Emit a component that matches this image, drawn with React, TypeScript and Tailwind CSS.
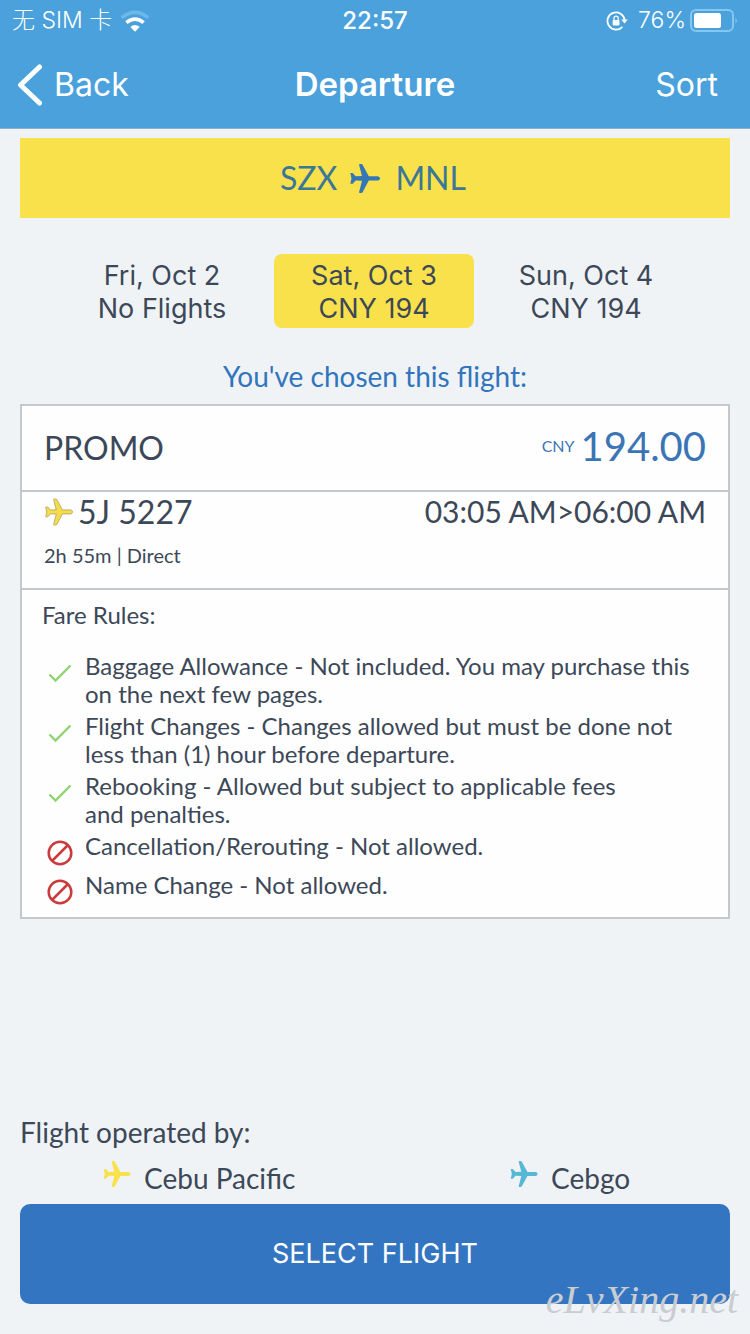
import React from "react";

const days = [
  { date: "Fri, Oct 2", fare: "No Flights", selected: false },
  { date: "Sat, Oct 3", fare: "CNY 194", selected: true },
  { date: "Sun, Oct 4", fare: "CNY 194", selected: false },
];

const rules = [
  { ok: true, text: "Baggage Allowance - Not included. You may purchase this on the next few pages." },
  { ok: true, text: "Flight Changes - Changes allowed but must be done not less than (1) hour before departure." },
  { ok: true, text: "Rebooking - Allowed but subject to applicable fees and\u00a0penalties." },
  { ok: false, text: "Cancellation/Rerouting - Not allowed." },
  { ok: false, text: "Name Change - Not allowed." },
];

function Plane({ className }: { className: string }) {
  return (
    <svg viewBox="-1 -1 32 31" className={className} fill="currentColor" aria-hidden="true">
      <path d="M0.3 9H2.2Q2.8 9 3.2 9.5L5.6 12.3L12 12L9.1 0.9Q9 0 9.8 0H11.4Q12.2 0 12.6 0.8L18.8 12.2H27.6Q30 12.4 30 14.4Q30 16.4 27.6 16.6H18.8L12.6 28.2Q12.2 29 11.4 29H9.8Q9 29 9.1 28.1L12 16.8L5.6 16.5L3.2 19.3Q2.8 19.8 2.2 19.8H0.3L1.5 14.4Z" />
    </svg>
  );
}

function Check() {
  return (
    <svg viewBox="0 0 26 26" className="size-[26px]" fill="none" stroke="#8fd470" strokeWidth="2.4" aria-hidden="true">
      <path d="M2.5 14.5L8.5 20.5L23.5 5.5" />
    </svg>
  );
}

function Forbidden() {
  return (
    <svg viewBox="0 0 26 26" className="size-[26px]" fill="none" stroke="#cb3b3b" strokeWidth="2.5" aria-hidden="true">
      <circle cx="13" cy="13" r="11.3" />
      <path d="M5.5 20.5L20.5 5.5" />
    </svg>
  );
}

function StatusBar() {
  return (
    <div className="grid h-[41px] grid-cols-3 items-center px-3 text-[23px]">
      <div className="flex items-center gap-2">
        <span className="font-['Inter','Noto_Sans_CJK_SC',sans-serif] font-light whitespace-nowrap">无 SIM 卡</span>
        <svg viewBox="0 0 30 24" className="h-6 w-[30px]" fill="none" aria-label="Wi-Fi">
          <path d="M1.8 8.6Q15 -2 28.2 8.6" stroke="#6cb8e8" strokeWidth="3.6" />
          <path d="M6.4 13.6Q15 6.6 23.6 13.6" stroke="#fff" strokeWidth="3.8" />
          <path d="M10.3 18Q15 14.2 19.7 18L15 22.8Z" fill="#fff" />
        </svg>
      </div>
      <span className="text-center text-[24px] font-medium">22:57</span>
      <div className="flex items-center justify-end">
        <svg viewBox="0 0 22 20" className="mr-[10px] h-5 w-[22px]" fill="none" stroke="currentColor" strokeWidth="1.8" aria-label="Rotation locked">
          <path d="M16.4 15.8A8.6 8.6 0 1 1 18.6 9" />
          <path d="M15.2 8.6H21.8L18.5 12.6Z" fill="currentColor" stroke="none" />
          <rect x="6.7" y="9" width="6.8" height="5.4" rx="0.8" fill="currentColor" stroke="none" />
          <path d="M8 9.5V7.2A2.1 2.1 0 0 1 12.2 7.2V9.5" strokeWidth="1.3" />
        </svg>
        <span className="mr-1 font-light">76%</span>
        <svg viewBox="0 0 48 24" className="h-6 w-12" fill="none" aria-label="Battery">
          <rect x="1" y="1" width="42" height="21" rx="5" stroke="#85c7ef" strokeWidth="2" />
          <rect x="4" y="4" width="27" height="15" rx="2.5" fill="#fff" />
          <path d="M45.5 8.5Q48 11.5 45.5 15Z" fill="#85c7ef" />
        </svg>
      </div>
    </div>
  );
}

export default function App() {
  return (
    <div className="flex min-h-screen flex-col bg-[#eff3f6] font-['Lato',sans-serif] text-[#3c4858]">
      <header className="border-b border-[#8fb1c9] bg-[#4aa1db] font-['Inter',sans-serif] text-white">
        <StatusBar />
        <nav className="grid h-[87px] grid-cols-3 items-center px-4 text-[32px]">
          <button type="button" className="flex items-center gap-3">
            <svg viewBox="0 0 26 44" className="h-11 w-[26px]" fill="none" stroke="currentColor" strokeWidth="5" strokeLinecap="round" strokeLinejoin="round" aria-hidden="true">
              <path d="M23.5 4L4.5 22L23.5 40" />
            </svg>
            <span>Back</span>
          </button>
          <h1 className="text-center text-[33px] font-semibold">Departure</h1>
          <button type="button" className="justify-self-end pr-4">Sort</button>
        </nav>
      </header>

      <main className="flex grow flex-col px-5 pt-[9px] pb-[30px]">
        <div className="flex h-20 items-center justify-center bg-[#f9e14c] pr-1 text-[32px] text-[#3b7796]">
          <span>SZX</span>
          <Plane className="mr-[14px] ml-3 h-[31px] w-8 text-[#3477b5]" />
          <span>MNL</span>
        </div>

        <div className="mt-9 flex justify-center gap-3 pr-[2px] font-['Inter',sans-serif] text-[27px] leading-[33px]">
          {days.map((d) => (
            <button
              key={d.date}
              type="button"
              aria-pressed={d.selected}
              className={d.selected ? "h-[74px] w-[200px] rounded-lg bg-[#f9e14c] pt-[2px]" : "h-[74px] w-[200px] rounded-lg pt-[2px]"}
            >
              <span className="block">{d.date}</span>
              <span className="block">{d.fare}</span>
            </button>
          ))}
        </div>

        <h2 className="mt-8 text-center text-[28px] leading-8 text-[#3275bd]">You've chosen this flight:</h2>

        <section className="mt-3 border-2 border-[#c5c8cb] bg-[#fefefe]">
          <div className="flex h-[86px] items-center justify-between border-b-2 border-[#c5c8cb] px-[22px]">
            <span className="text-[32px]">PROMO</span>
            <span className="flex items-center gap-[6px] pb-1 text-[#3b75b5]">
              <span className="text-[16px]">CNY</span>
              <span className="text-[40px]">194.00</span>
            </span>
          </div>
          <div className="h-[98px] border-b-2 border-[#c5c8cb] px-[22px]">
            <div className="flex h-10 items-center justify-between">
              <span className="flex items-center gap-1 text-[32px]">
                <Plane className="h-7 w-[30px] stroke-[#b9a85f] text-[#f5dc4b]" />
                5J 5227
              </span>
              <span className="pb-[2px] text-[30px]">03:05 AM&gt;06:00 AM</span>
            </div>
            <p className="mt-[11px] text-[20px] leading-6">2h 55m | Direct</p>
          </div>
          <div className="px-5 pt-[11px] pb-[18px]">
            <h3 className="text-[24px] leading-7">Fare Rules:</h3>
            <ul className="mt-[23px] text-[24px] leading-7">
              {rules.map((r) => (
                <li key={r.text} className={r.ok ? "mb-1 flex gap-3" : "mb-[11px] flex gap-3 last:mb-0"}>
                  <span className="ml-[5px] h-7 shrink-0 pt-2">{r.ok ? <Check /> : <Forbidden />}</span>
                  <span>{r.text}</span>
                </li>
              ))}
            </ul>
          </div>
        </section>

        <footer className="mt-auto text-[28px] leading-9">
          <p>Flight operated by:</p>
          <div className="mt-[10px] grid grid-cols-[407px_1fr] pl-[82px]">
            <div className="flex items-start gap-3">
              <Plane className="h-7 w-[30px] text-[#f9e14c]" />
              <span>Cebu Pacific</span>
            </div>
            <div className="flex items-start gap-3">
              <Plane className="h-7 w-[30px] text-[#57b8d6]" />
              <span>Cebgo</span>
            </div>
          </div>
          <div className="relative mt-2">
            <button type="button" className="h-[100px] w-full rounded-[10px] bg-[#3475c2] font-['Inter',sans-serif] text-[27px] text-white">
              SELECT FLIGHT
            </button>
            <span className="absolute -right-2 -bottom-4 font-['Liberation_Serif',serif] text-[40px] leading-none text-[#c9cdd2] italic">
              eLvXing.net
            </span>
          </div>
        </footer>
      </main>
    </div>
  );
}
